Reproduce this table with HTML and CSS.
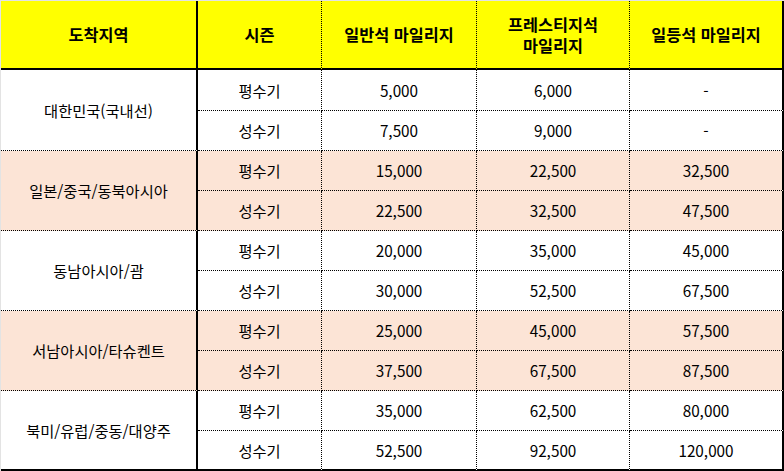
FILE: index.html
```html
<!DOCTYPE html>
<html lang="ko">
<head>
<meta charset="utf-8">
<link rel="stylesheet" href="styles.css">
</head>
<body>
<div class="sheet">
  <div class="c h">도착지역</div>
  <div class="c h">시즌</div>
  <div class="c h">일반석 마일리지</div>
  <div class="c h">프레스티지석<br>마일리지</div>
  <div class="c h last">일등석 마일리지</div>

  <div class="c region first">대한민국(국내선)</div>
  <div class="c first">평수기</div>
  <div class="c first">5,000</div>
  <div class="c first">6,000</div>
  <div class="c last first">-</div>
  <div class="c">성수기</div>
  <div class="c">7,500</div>
  <div class="c">9,000</div>
  <div class="c last">-</div>

  <div class="c region pink">일본/중국/동북아시아</div>
  <div class="c pink">평수기</div>
  <div class="c pink">15,000</div>
  <div class="c pink">22,500</div>
  <div class="c last pink">32,500</div>
  <div class="c pink">성수기</div>
  <div class="c pink">22,500</div>
  <div class="c pink">32,500</div>
  <div class="c last pink">47,500</div>

  <div class="c region">동남아시아/괌</div>
  <div class="c">평수기</div>
  <div class="c">20,000</div>
  <div class="c">35,000</div>
  <div class="c last">45,000</div>
  <div class="c">성수기</div>
  <div class="c">30,000</div>
  <div class="c">52,500</div>
  <div class="c last">67,500</div>

  <div class="c region pink">서남아시아/타슈켄트</div>
  <div class="c pink">평수기</div>
  <div class="c pink">25,000</div>
  <div class="c pink">45,000</div>
  <div class="c last pink">57,500</div>
  <div class="c pink">성수기</div>
  <div class="c pink">37,500</div>
  <div class="c pink">67,500</div>
  <div class="c last pink">87,500</div>

  <div class="c region bottom">북미/유럽/중동/대양주</div>
  <div class="c">평수기</div>
  <div class="c">35,000</div>
  <div class="c">62,500</div>
  <div class="c last">80,000</div>
  <div class="c bottom">성수기</div>
  <div class="c bottom">52,500</div>
  <div class="c bottom">92,500</div>
  <div class="c last bottom">120,000</div>
</div>
</body>
</html>
```
FILE: styles.css
```css
html, body {
  margin: 0;
  padding: 0;
  background: #e3e3e3;
}
body {
  width: 784px;
  height: 471px;
  overflow: hidden;
}
.sheet {
  margin: 1px 0 0 1px;
  display: grid;
  grid-template-columns: 197px 124px 155px 153px 154px;
  grid-template-rows: 69px 41px repeat(9, 40px);
  background: #fff;
  width: 783px;
  font-family: "Noto Sans CJK KR", sans-serif;
  font-size: 15.3px;
  color: #000;
}
.c {
  box-sizing: border-box;
  display: flex;
  align-items: center;
  justify-content: center;
  text-align: center;
  border-right: 1px dotted #000;
  border-bottom: 1px dotted #000;
  line-height: 19px;
  background: #fff;
}
.h {
  background: #ffff00;
  font-weight: bold;
  font-size: 16.3px;
  line-height: 21px;
  border-bottom: 2px solid #000;
}
.region {
  grid-column: 1;
  grid-row: span 2;
  border-right: 2px solid #000;
}
.last {
  border-right: 2px solid #000;
}
.h:first-child {
  border-right: 2px solid #000;
}
.pink {
  background: #fce4d6;
}
.bottom {
  border-bottom: 2px solid #000;
}
```
